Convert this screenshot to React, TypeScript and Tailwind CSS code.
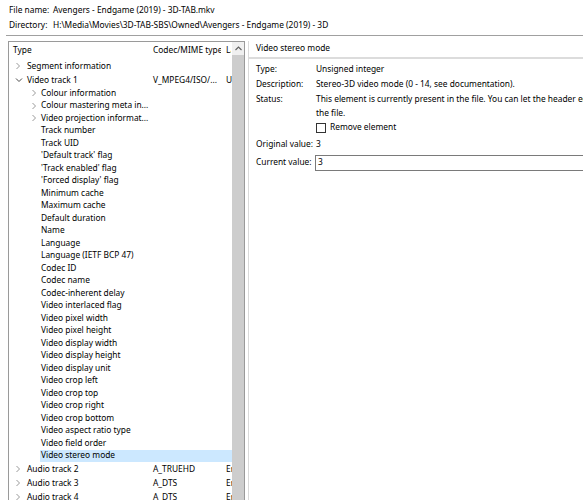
import React from "react";

const Chevron = ({ open }: { open?: boolean }) =>
  open ? (
    <svg width="8" height="6" viewBox="0 0 8 6" className="block">
      <polyline points="1,1.5 4,4.5 7,1.5" fill="none" stroke="#4a4a4a" strokeWidth="1" />
    </svg>
  ) : (
    <svg width="6" height="8" viewBox="0 0 6 8" className="block">
      <polyline points="1.5,1 4.5,4 1.5,7" fill="none" stroke="#9a9a9a" strokeWidth="1" />
    </svg>
  );

type Row = {
  label: string;
  level: 0 | 1;
  chevron?: "open" | "closed";
  codec?: string;
  lang?: string;
  selected?: boolean;
};

const children = [
  "Track number",
  "Track UID",
  "'Default track' flag",
  "'Track enabled' flag",
  "'Forced display' flag",
  "Minimum cache",
  "Maximum cache",
  "Default duration",
  "Name",
  "Language",
  "Language (IETF BCP 47)",
  "Codec ID",
  "Codec name",
  "Codec-inherent delay",
  "Video interlaced flag",
  "Video pixel width",
  "Video pixel height",
  "Video display width",
  "Video display height",
  "Video display unit",
  "Video crop left",
  "Video crop top",
  "Video crop right",
  "Video crop bottom",
  "Video aspect ratio type",
  "Video field order",
];

const rows: Row[] = [
  { label: "Segment information", level: 0, chevron: "closed" },
  { label: "Video track 1", level: 0, chevron: "open", codec: "V_MPEG4/ISO/...", lang: "U" },
  { label: "Colour information", level: 1, chevron: "closed" },
  { label: "Colour mastering meta in...", level: 1, chevron: "closed" },
  { label: "Video projection informat...", level: 1, chevron: "closed" },
  ...children.map((c) => ({ label: c, level: 1 as const })),
  { label: "Video stereo mode", level: 1, selected: true },
  { label: "Audio track 2", level: 0, chevron: "closed", codec: "A_TRUEHD", lang: "En" },
  { label: "Audio track 3", level: 0, chevron: "closed", codec: "A_DTS", lang: "En" },
  { label: "Audio track 4", level: 0, chevron: "closed", codec: "A_DTS", lang: "En" },
];

function TreeRow({ r }: { r: Row }) {
  const h = r.level === 0 ? "h-[14px]" : "h-[12.5px]";
  return (
    <div className={`flex ${h} items-center whitespace-nowrap`}>
      <div className="relative flex h-full w-[141px] shrink-0 items-center overflow-hidden">
        {r.selected && <div className="absolute bottom-0 left-[31px] right-0 top-0 bg-[#cce8ff]" />}
        {r.level === 0 ? (
          <>
            <div className="flex w-[18px] shrink-0 items-center pl-[6px]">
              {r.chevron && <Chevron open={r.chevron === "open"} />}
            </div>
            <span className="relative">{r.label}</span>
          </>
        ) : (
          <>
            <div className="flex w-[32px] shrink-0 items-center pl-[22px]">
              {r.chevron && <Chevron open={r.chevron === "open"} />}
            </div>
            <span className="relative">{r.label}</span>
          </>
        )}
      </div>
      <div className={`flex h-full w-[73px] shrink-0 items-center overflow-hidden pl-[3px] ${r.selected ? "bg-[#cce8ff]" : ""}`}>
        {r.codec}
      </div>
      <div className={`flex h-full w-[9px] shrink-0 items-center pl-[3px] ${r.selected ? "bg-[#cce8ff]" : ""}`}>
        <div className="w-[6px] overflow-hidden">{r.lang}</div>
      </div>
    </div>
  );
}

export default function App() {
  return (
    <div
      className="relative h-[500px] w-[583px] overflow-hidden bg-white text-[8.4px] text-[#000]"
      style={{ fontFamily: '"Segoe UI", "Noto Sans", sans-serif' }}
    >
      {/* file info */}
      <div className="pl-[9px] pt-[3px]">
        <div className="flex h-[15px] items-center whitespace-nowrap">
          <span className="w-[44px] shrink-0">File name:</span>
          <span>Avengers - Endgame (2019) - 3D-TAB.mkv</span>
        </div>
        <div className="flex h-[15px] items-center whitespace-nowrap">
          <span className="w-[44px] shrink-0">Directory:</span>
          <span>H:\Media\Movies\3D-TAB-SBS\Owned\Avengers - Endgame (2019) - 3D</span>
        </div>
      </div>
      <div className="ml-[6px] mt-[2px] h-px bg-[#a0a0a0]" />

      <div className="mt-[5px] flex">
        {/* tree */}
        <div className="ml-[8px] flex h-[470px] w-[237px] shrink-0 border border-[#9a9a9a] bg-white">
          <div className="w-[223px] shrink-0 overflow-hidden">
            <div className="flex h-[17px] items-center whitespace-nowrap">
              <div className="w-[141px] shrink-0 pl-[4px]">Type</div>
              <div className="w-[73px] shrink-0 overflow-hidden pl-[3px]">
                <div className="w-[68px] overflow-hidden">Codec/MIME type</div>
              </div>
              <div className="w-[9px] shrink-0 pl-[3px]">
                <div className="w-[5px] overflow-hidden">Language</div>
              </div>
            </div>
            {rows.map((r, i) => (
              <TreeRow key={i} r={r} />
            ))}
          </div>
          <div className="flex w-[12px] shrink-0 flex-col bg-[#f0f0f0]">
            <div className="flex h-[13px] items-center justify-center">
              <svg width="7" height="5" viewBox="0 0 7 5" className="block">
                <polyline points="0.5,4 3.5,1 6.5,4" fill="none" stroke="#606060" strokeWidth="1.1" />
              </svg>
            </div>
            <div className="flex-1 bg-[#cdcdcd]" />
          </div>
        </div>

        {/* details */}
        <div className="ml-[3px] flex h-[470px] flex-1 flex-col whitespace-nowrap border-l border-[#dadada]">
          <div className="flex h-[14px] items-center pl-[7px]">Video stereo mode</div>
          <div className="mt-[2px] h-[2px] bg-[#dcdcdc]" />
          <div className="pl-[7px] pt-[3px]">
            <div className="flex h-[15px] items-center">
              <span className="w-[60px] shrink-0">Type:</span>
              <span>Unsigned integer</span>
            </div>
            <div className="flex h-[15px] items-center">
              <span className="w-[60px] shrink-0">Description:</span>
              <span>Stereo-3D video mode (0 - 14, see documentation).</span>
            </div>
            <div className="flex">
              <span className="flex h-[15px] w-[60px] shrink-0 items-center">Status:</span>
              <div className="flex flex-col">
                <span className="flex h-[15px] items-center">
                  This element is currently present in the file. You can let the header editor remove the element from
                </span>
                <span className="flex h-[12px] items-center">the file.</span>
              </div>
            </div>
            <div className="flex h-[17.5px] items-center pl-[60px]">
              <div className="h-[10px] w-[10px] border border-[#333] bg-white" />
              <span className="ml-[4px]">Remove element</span>
            </div>
            <div className="flex h-[16px] items-center">
              <span className="w-[60px] shrink-0">Original value:</span>
              <span>3</span>
            </div>
            <div className="mt-[2px] flex h-[16px] items-center">
              <span className="w-[59px] shrink-0">Current value:</span>
              <div className="flex h-[16px] w-[400px] items-center border border-[#7a7a7a] pl-[2px]">3</div>
            </div>
          </div>
        </div>
      </div>
    </div>
  );
}
